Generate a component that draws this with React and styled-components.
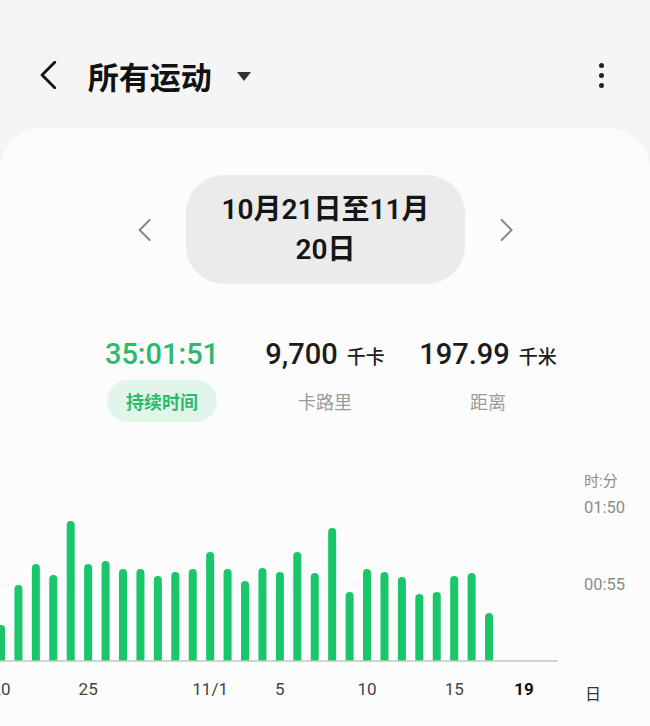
import React from 'react'
import styled, { createGlobalStyle } from 'styled-components'

const GlobalStyle = createGlobalStyle`
  html, body {
    margin: 0;
    padding: 0;
    background: #f5f5f5;
    font-family: Roboto, "Noto Sans CJK SC", sans-serif;
  }
`

const Page = styled.div`
  width: 650px;
  height: 726px;
  overflow: hidden;
  display: flex;
  flex-direction: column;
  background: #f5f5f5;
`

const Header = styled.div`
  display: flex;
  align-items: center;
  height: 56px;
  padding: 47px 46px 25px 40px;
`

const Title = styled.h1`
  margin: 0 0 0 31px;
  font-size: 31px;
  font-weight: 700;
  color: #111;
  letter-spacing: 0;
`

const Caret = styled.span`
  margin-left: 25px;
  width: 0;
  height: 0;
  border-left: 7px solid transparent;
  border-right: 7px solid transparent;
  border-top: 9px solid #333;
  margin-top: 2px;
`

const Kebab = styled.div`
  margin-left: auto;
  display: flex;
  flex-direction: column;
  gap: 5px;
  span {
    width: 5px;
    height: 5px;
    border-radius: 50%;
    background: #222;
  }
`

const Card = styled.div`
  flex: 1;
  background: #fcfcfc;
  border-radius: 42px 42px 0 0;
  display: flex;
  flex-direction: column;
`

const DateNav = styled.div`
  display: flex;
  justify-content: center;
  align-items: center;
  gap: 35px;
  margin-top: 47px;
  margin-left: 1px;
`

const DatePill = styled.div`
  width: 279px;
  height: 109px;
  box-sizing: border-box;
  border-radius: 38px;
  background: #ebebeb;
  display: flex;
  align-items: center;
  justify-content: center;
  text-align: center;
  font-size: 28px;
  font-weight: 600;
  line-height: 40px;
  color: #151515;
`

const Stats = styled.div`
  display: grid;
  grid-template-columns: repeat(3, 163px);
  justify-content: center;
  margin-top: 52px;
`

const Stat = styled.div`
  display: flex;
  flex-direction: column;
  align-items: center;
  gap: 8px;
`

const Value = styled.div`
  display: flex;
  align-items: baseline;
  gap: 9px;
  height: 36px;
  line-height: 36px;
  font-size: 29px;
  font-weight: 500;
  color: ${p => (p.$active ? '#2cb96b' : '#1c1c1c')};
`

const Unit = styled.span`
  font-size: 19px;
  font-weight: 500;
  color: #1c1c1c;
`

const Label = styled.div`
  height: 42px;
  padding: 0 19px;
  border-radius: 21px;
  display: flex;
  align-items: center;
  font-size: 18px;
  font-weight: ${p => (p.$active ? 700 : 400)};
  color: ${p => (p.$active ? '#2cb96b' : '#9b9b9b')};
  background: ${p => (p.$active ? '#e2f5ea' : 'transparent')};
`

const ChartWrap = styled.div`
  margin-top: 38px;
  svg {
    display: block;
    font-family: Roboto, "Noto Sans CJK SC", sans-serif;
  }
`

const Chevron = ({ dir = 'left', size = 22, color = '#888', width = 2 }) => (
  <svg width={size * 0.6} height={size} viewBox="0 0 12 22">
    <path
      d={dir === 'left' ? 'M11 1 L1 11 L11 21' : 'M1 1 L11 11 L1 21'}
      fill="none"
      stroke={color}
      strokeWidth={width}
      strokeLinecap="round"
      strokeLinejoin="round"
    />
  </svg>
)

// minutes per day, already scaled to px (1.4px per minute)
const heights = [36, 76, 97, 86, 140, 97, 100, 92, 92, 85, 89, 92, 109, 92, 80, 93, 89, 109, 88, 133, 69, 92, 89, 84, 67, 69, 85, 88, 48]
const ticks = [
  { i: 0, t: '20' },
  { i: 5, t: '25' },
  { i: 12, t: '11/1' },
  { i: 16, t: '5' },
  { i: 21, t: '10' },
  { i: 26, t: '15' },
  { i: 30, t: '19', bold: true },
]
const STEP = 17.43
const X0 = 1
const BASE = 201

const barPath = (cx, h) => {
  const x = cx - 4
  const top = BASE - h
  return `M${x} ${BASE} V${top + 4} A4 4 0 0 1 ${x + 8} ${top + 4} V${BASE} Z`
}

const Chart = () => (
  <svg width="650" height="266" viewBox="0 0 650 266">
    <line x1="0" x2="558" y1="47" y2="47" stroke="#d8d8d8" strokeWidth="1" strokeDasharray="1 3" />
    <line x1="0" x2="558" y1="124" y2="124" stroke="#d8d8d8" strokeWidth="1" strokeDasharray="1 3" />
    {heights.map((h, i) => (
      <path key={i} d={barPath(X0 + i * STEP, h)} fill="#19c66a" />
    ))}
    <line x1="0" x2="558" y1={BASE} y2={BASE} stroke="#c6c6c6" strokeWidth="1.6" />
    {ticks.map(tk => (
      <text
        key={tk.t}
        x={X0 + tk.i * STEP}
        y="235"
        textAnchor="middle"
        fontSize="17"
        fontWeight={tk.bold ? 700 : 400}
        fill={tk.bold ? '#111' : '#444'}
      >
        {tk.t}
      </text>
    ))}
    <text x="584" y="26" fontSize="15" fill="#8c8c8c">时:分</text>
    <text x="584" y="53" fontSize="16.5" fill="#8c8c8c">01:50</text>
    <text x="584" y="130" fontSize="16.5" fill="#8c8c8c">00:55</text>
    <text x="585" y="240" fontSize="16" fill="#333">日</text>
  </svg>
)

export default function App() {
  return (
    <Page>
      <GlobalStyle />
      <Header>
        <Chevron dir="left" size={28} color="#111" width={2.2} />
        <Title>所有运动</Title>
        <Caret />
        <Kebab>
          <span />
          <span />
          <span />
        </Kebab>
      </Header>
      <Card>
        <DateNav>
          <Chevron dir="left" />
          <DatePill>
            10月21日至11月
            <br />
            20日
          </DatePill>
          <Chevron dir="right" />
        </DateNav>
        <Stats>
          <Stat>
            <Value $active>35:01:51</Value>
            <Label $active>持续时间</Label>
          </Stat>
          <Stat>
            <Value>
              9,700<Unit>千卡</Unit>
            </Value>
            <Label>卡路里</Label>
          </Stat>
          <Stat>
            <Value>
              197.99<Unit>千米</Unit>
            </Value>
            <Label>距离</Label>
          </Stat>
        </Stats>
        <ChartWrap>
          <Chart />
        </ChartWrap>
      </Card>
    </Page>
  )
}
